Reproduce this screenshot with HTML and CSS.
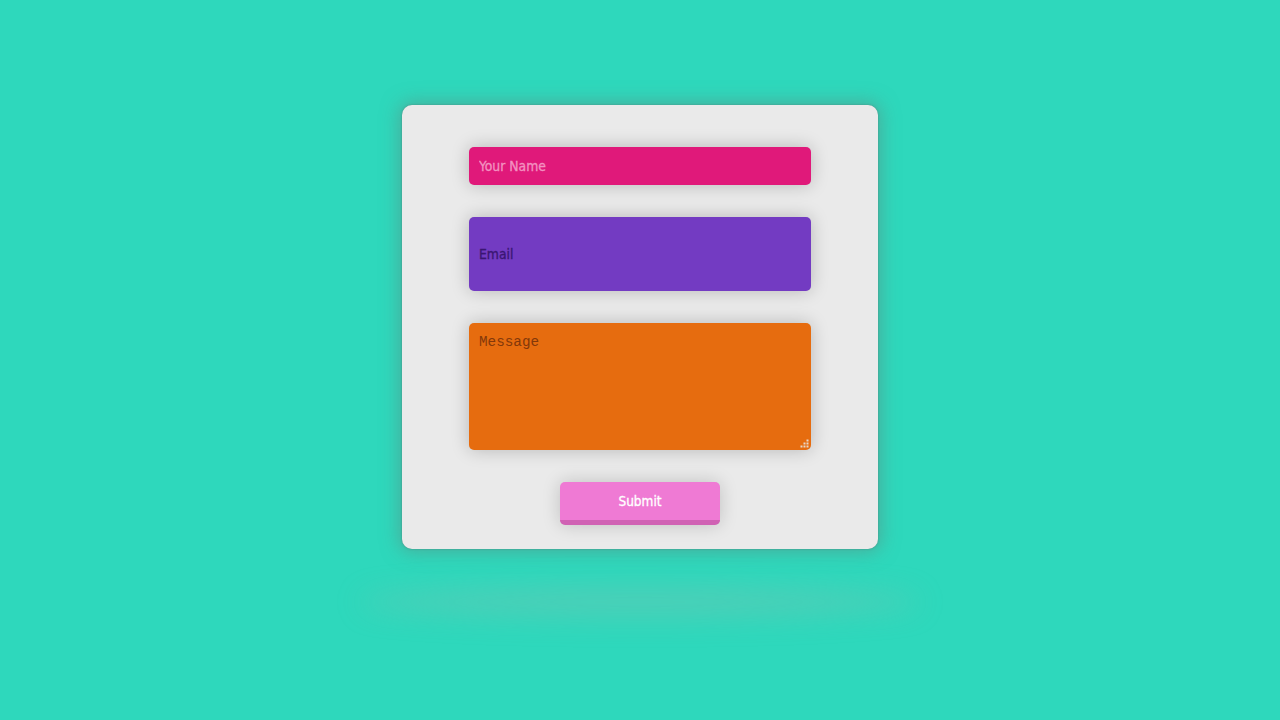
FILE: index.html
```html
<!DOCTYPE html>
<html>
<head>
<meta charset="utf-8">
<link rel="stylesheet" href="styles.css">
</head>
<body>
<div class="stage">
  <form class="card">
    <input class="field name" type="text" placeholder="Your Name">
    <input class="field email" type="text" placeholder="Email">
    <div class="message-wrap">
      <textarea class="field message" placeholder="Message"></textarea>
      <svg class="grip" width="9" height="9" viewBox="0 0 9 9">
        <g fill="#e8d6c8">
          <rect x="6.5" y="0.5" width="2" height="2"/>
          <rect x="3.5" y="3.5" width="2" height="2"/>
          <rect x="6.5" y="3.5" width="2" height="2"/>
          <rect x="0.5" y="6.5" width="2" height="2"/>
          <rect x="3.5" y="6.5" width="2" height="2"/>
          <rect x="6.5" y="6.5" width="2" height="2"/>
        </g>
      </svg>
    </div>
    <button class="submit" type="button">Submit</button>
  </form>
  <div class="floor-shadow"></div>
</div>
</body>
</html>
```

FILE: styles.css
```css
html, body {
  margin: 0;
  padding: 0;
  background: #2ed8bc;
  height: 100%;
}
.stage {
  display: flex;
  flex-direction: column;
  align-items: center;
  padding-top: 105px;
}
.card {
  box-sizing: border-box;
  width: 476px;
  height: 444px;
  background: #eaeaea;
  border-radius: 10px;
  box-shadow: 0 0 2px rgba(80,120,115,0.7), 0 0 18px 3px rgba(95,140,130,0.55);
  display: flex;
  flex-direction: column;
  align-items: center;
  padding-top: 42px;
  gap: 32px;
}
.field {
  box-sizing: border-box;
  width: 342px;
  border: none;
  border-radius: 5px;
  margin: 0;
  padding: 0 10px;
  outline: none;
  box-shadow: 0 0 18px rgba(0,0,0,0.22);
  font-family: "DejaVu Sans Condensed", "DejaVu Sans", sans-serif;
  font-stretch: condensed;
  font-size: 13.8px;
}
.name {
  height: 38px;
  background: #e0197a;
}
.name::placeholder { color: #f391c0; -webkit-text-stroke: 0.3px #f391c0; }
.email {
  height: 74px;
  background: #733bc2;
}
.email::placeholder { color: #3a1672; -webkit-text-stroke: 0.3px #3a1672; }
.message-wrap {
  position: relative;
  width: 342px;
  height: 127px;
}
.message {
  height: 127px;
  background: #e66c0f;
  padding: 11px 10px;
  font-family: "Liberation Mono", "Courier New", monospace;
  font-stretch: normal;
  font-size: 14.3px;
  resize: none;
  display: block;
}
.message::placeholder { color: #83380a; }
.grip {
  position: absolute;
  right: 2px;
  bottom: 2px;
}
.submit {
  box-sizing: border-box;
  width: 160px;
  height: 43px;
  border: none;
  border-bottom: 5px solid #d062b4;
  border-radius: 5px;
  background: #ef7ad4;
  color: #ffffff;
  font-family: "DejaVu Sans Condensed", "DejaVu Sans", sans-serif;
  font-stretch: condensed;
  font-size: 13.5px;
  -webkit-text-stroke: 0.3px #ffffff;
  padding: 0;
  box-shadow: 0 0 18px rgba(0,0,0,0.18);
}
.floor-shadow {
  width: 560px;
  height: 30px;
  margin-top: 38px;
  background: rgba(140,190,175,0.35);
  border-radius: 50%;
  filter: blur(14px);
}
```
